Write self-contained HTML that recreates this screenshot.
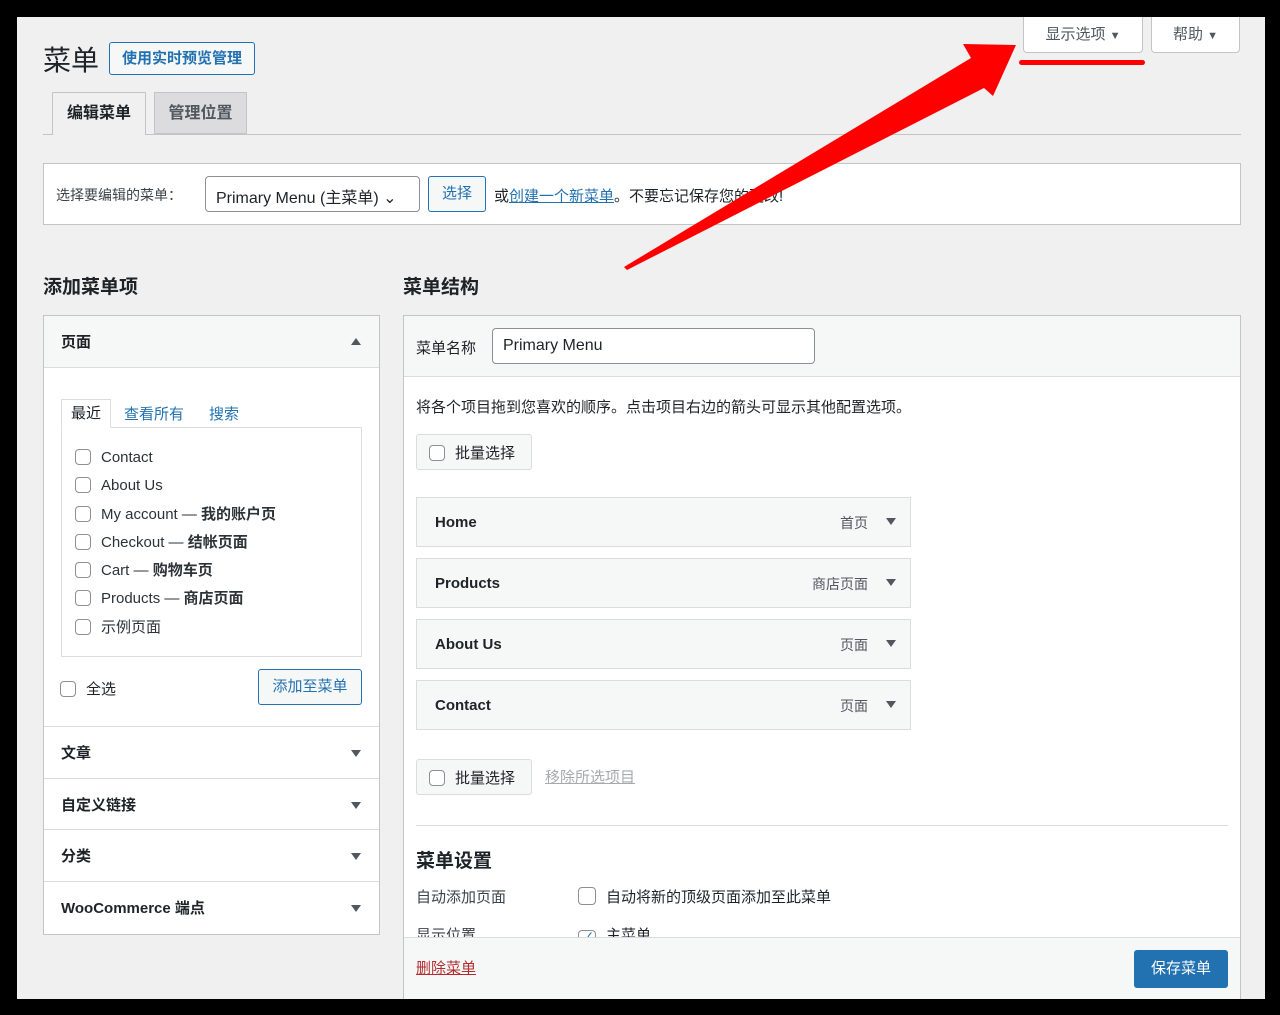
<!DOCTYPE html><html><head><meta charset="utf-8"><style>
*{box-sizing:border-box;margin:0;padding:0}
body{width:1280px;height:1015px;background:#000;position:relative;overflow:hidden;font-family:"Liberation Sans","Noto Sans CJK SC",sans-serif;color:#1d2327;font-size:14px}
.a{position:absolute}
#pg{left:17px;top:17px;width:1248px;height:982px;background:#f0f0f1;overflow:hidden}
.box{background:#fff;border:1px solid #c3c4c7}
.cb{display:inline-block;width:16px;height:16px;border:1px solid #8c8f94;border-radius:4px;background:#fff;vertical-align:-3px;margin-right:10px}
.btn2{border:1px solid #2271b1;color:#2271b1;background:#f6f7f7;border-radius:3px;text-align:center}
.item{left:12px;width:495px;height:50px;background:#f6f7f7;border:1px solid #dcdcde;font-weight:bold;font-size:15px;padding:16px 18px}
.item span{position:absolute;right:42px;top:15px;font-weight:normal;font-size:14px;color:#50575e}
.item i{position:absolute;right:14px;top:20px;border:5px solid transparent;border-top:7px solid #50575e;border-bottom:0}
.sec{left:0;width:335px;height:52px;border-top:1px solid #dcdcde;font-weight:bold;font-size:15px;padding:15px 17px}
.sec i{position:absolute;right:18px;top:23px;border:5px solid transparent;border-top:7px solid #50575e;border-bottom:0}
a{color:#2271b1}
</style></head><body>
<div id="pg" class="a">
<div class="a" style="left:26px;top:22px;font-size:28px">菜单</div>
<div class="a btn2" style="left:92px;top:25px;width:146px;height:33px;line-height:31px;font-size:15px;font-weight:bold">使用实时预览管理</div>
<div class="a" style="left:1006px;top:0;width:120px;height:36px;background:#fff;border:1px solid #c3c4c7;border-top:0;border-radius:0 0 4px 4px;text-align:center;line-height:36px;color:#50575e;font-size:15px">显示选项 <span style="font-size:11px">▼</span></div>
<div class="a" style="left:1134px;top:0;width:89px;height:36px;background:#fff;border:1px solid #c3c4c7;border-top:0;border-radius:0 0 4px 4px;text-align:center;line-height:36px;color:#50575e;font-size:15px">帮助 <span style="font-size:11px">▼</span></div>
<div class="a" style="left:1002px;top:43px;width:126px;height:5px;background:#f00;border-radius:3px"></div>
<div class="a" style="left:26px;top:117px;width:1198px;height:1px;background:#c3c4c7"></div>
<div class="a" style="left:35px;top:75px;width:94px;height:43px;background:#f0f0f1;border:1px solid #c3c4c7;border-bottom:0;font-weight:bold;font-size:16px;text-align:center;line-height:42px">编辑菜单</div>
<div class="a" style="left:137px;top:75px;width:93px;height:42px;background:#dcdcde;border:1px solid #c3c4c7;font-weight:bold;font-size:16px;text-align:center;line-height:42px;color:#50575e">管理位置</div>
<div class="a box" style="left:26px;top:146px;width:1198px;height:62px"></div>
<div class="a" style="left:39px;top:168px;font-size:14px;color:#3c434a">选择要编辑的菜单：</div>
<div class="a" style="left:188px;top:159px;width:215px;height:36px;border:1px solid #8c8f94;border-radius:4px;background:#fff;padding:7px 10px;font-size:16px">Primary Menu (主菜单) ⌄</div>
<div class="a btn2" style="left:411px;top:159px;width:58px;height:36px;line-height:34px;font-size:15px">选择</div>
<div class="a" style="left:477px;top:168px;font-size:15px">或<a href="#x">创建一个新菜单</a>。不要忘记保存您的更改!</div>
<div class="a" style="left:26px;top:255px;font-size:19px;font-weight:bold">添加菜单项</div>
<div class="a" style="left:386px;top:255px;font-size:19px;font-weight:bold">菜单结构</div>
<div class="a box" style="left:26px;top:298px;width:337px;height:620px">
 <div class="a" style="left:0;top:0;width:335px;height:52px;background:#f6f7f7;border-bottom:1px solid #dcdcde;font-weight:bold;font-size:15px;padding:15px 17px">页面<i class="a" style="right:18px;top:22px;border:5px solid transparent;border-bottom:7px solid #50575e;border-top:0"></i></div>
 <div class="a" style="left:17px;top:83px;width:50px;height:29px;border:1px solid #dcdcde;border-bottom:1px solid #fff;background:#fff;z-index:2;text-align:center;line-height:28px;font-size:15px">最近</div>
 <div class="a" style="left:80px;top:87px;font-size:15px;color:#2271b1">查看所有</div>
 <div class="a" style="left:165px;top:87px;font-size:15px;color:#2271b1">搜索</div>
 <div class="a" style="left:17px;top:111px;width:301px;height:230px;border:1px solid #dcdcde;font-size:15px;line-height:28.3px;padding:16px 13px;color:#2c3338">
  <div><span class="cb"></span>Contact</div><div><span class="cb"></span>About Us</div><div><span class="cb"></span>My account — <b>我的账户页</b></div><div><span class="cb"></span>Checkout — <b>结帐页面</b></div><div><span class="cb"></span>Cart — <b>购物车页</b></div><div><span class="cb"></span>Products — <b>商店页面</b></div><div><span class="cb"></span>示例页面</div>
 </div>
 <div class="a" style="left:16px;top:362px;font-size:15px"><span class="cb"></span>全选</div>
 <div class="a btn2" style="left:214px;top:353px;width:104px;height:36px;line-height:34px;font-size:15px">添加至菜单</div>
 <div class="a sec" style="top:410px">文章<i></i></div>
 <div class="a sec" style="top:462px">自定义链接<i></i></div>
 <div class="a sec" style="top:513px">分类<i></i></div>
 <div class="a sec" style="top:565px">WooCommerce 端点<i></i></div>
</div>
<div class="a box" style="left:386px;top:298px;width:838px;height:700px">
 <div class="a" style="left:0;top:0;width:836px;height:61px;background:#f6f7f7;border-bottom:1px solid #dcdcde"></div>
 <div class="a" style="left:12px;top:21px;font-size:15px">菜单名称</div>
 <div class="a" style="left:88px;top:12px;width:323px;height:36px;border:1px solid #8c8f94;border-radius:4px;background:#fff;padding:8px 10px;font-size:16px">Primary Menu</div>
 <div class="a" style="left:12px;top:80px;font-size:15px">将各个项目拖到您喜欢的顺序。点击项目右边的箭头可显示其他配置选项。</div>
 <div class="a" style="left:12px;top:118px;width:116px;height:36px;border:1px solid #dcdcde;background:#f6f7f7;border-radius:3px;padding:7px 12px;font-size:15px"><span class="cb"></span>批量选择</div>
 <div class="a item" style="top:181px">Home<span>首页</span><i></i></div>
 <div class="a item" style="top:242px">Products<span>商店页面</span><i></i></div>
 <div class="a item" style="top:303px">About Us<span>页面</span><i></i></div>
 <div class="a item" style="top:364px">Contact<span>页面</span><i></i></div>
 <div class="a" style="left:12px;top:443px;width:116px;height:36px;border:1px solid #dcdcde;background:#f6f7f7;border-radius:3px;padding:7px 12px;font-size:15px"><span class="cb"></span>批量选择</div>
 <div class="a" style="left:141px;top:450px;font-size:15px;color:#a7aaad;text-decoration:underline">移除所选项目</div>
 <div class="a" style="left:12px;top:509px;width:812px;height:1px;background:#dcdcde"></div>
 <div class="a" style="left:12px;top:530px;font-size:19px;font-weight:bold">菜单设置</div>
 <div class="a" style="left:12px;top:570px;font-size:15px;color:#3c434a">自动添加页面</div>
 <div class="a" style="left:174px;top:570px;font-size:15px"><span class="cb" style="width:18px;height:18px"></span>自动将新的顶级页面添加至此菜单</div>
 <div class="a" style="left:12px;top:608px;font-size:15px;color:#3c434a">显示位置</div>
 <div class="a" style="left:174px;top:608px;font-size:15px"><span class="cb" style="width:18px;height:18px;color:#2271b1;font-size:14px;line-height:14px;text-align:center">✓</span>主菜单</div>
 <div class="a" style="left:0;top:621px;width:836px;height:80px;background:#f6f7f7;border-top:1px solid #dcdcde"></div>
 <div class="a" style="left:12px;top:641px;font-size:15px;color:#b32d2e;text-decoration:underline">删除菜单</div>
 <div class="a" style="left:730px;top:634px;width:94px;height:38px;background:#2271b1;border-radius:3px;color:#fff;text-align:center;line-height:38px;font-size:15px">保存菜单</div>
</div>
</div>
<svg class="a" style="left:0;top:0" width="1280" height="1015"><polygon points="624,267 627,270 984,88 993,96 1016,45 963,44 971,58" fill="#f00"/></svg>
</body></html>
